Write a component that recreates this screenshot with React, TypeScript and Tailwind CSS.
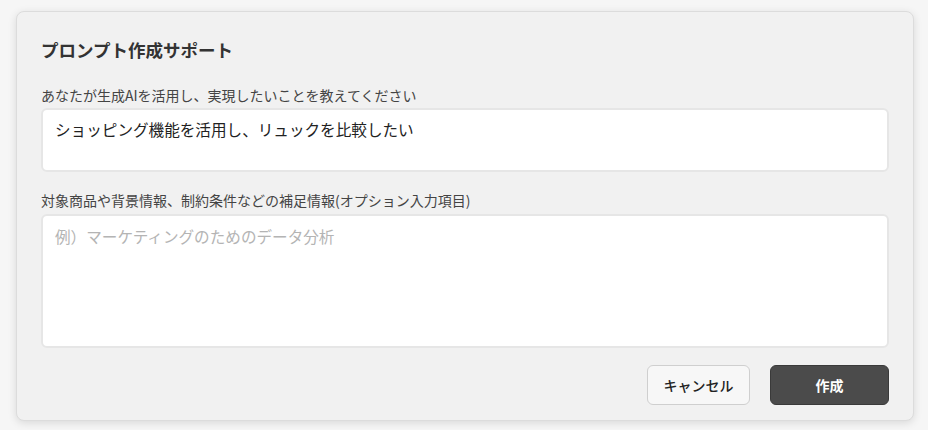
export default function App() {
  return (
    <div
      className="min-h-[430px] w-[928px] bg-[#f6f6f6] pt-[11px] pl-[16px] pr-[14px]"
      style={{ fontFamily: '"Noto Sans CJK JP", "Noto Sans", sans-serif' }}
    >
      <div className="flex h-[410px] flex-col rounded-[8px] border border-[#dcdcdc] bg-[#f1f1f1] px-[24px] pt-[26px] pb-[15px] shadow-[0_2px_8px_rgba(0,0,0,0.12)]">
        <h2 className="text-[17.5px] leading-[24px] font-bold text-[#333]">プロンプト作成サポート</h2>

        <label className="mt-[23px] text-[14px] leading-[20px] text-[#444]">
          あなたが生成AIを活用し、実現したいことを教えてください
        </label>
        <textarea
          readOnly
          defaultValue="ショッピング機能を活用し、リュックを比較したい"
          className="mt-[3px] h-[64px] resize-none rounded-[6px] border-2 border-[#e6e6e6] bg-white px-[12px] py-[7px] text-[15.6px] leading-[24px] text-[#222] outline-none"
        />

        <label className="mt-[18px] text-[14px] leading-[20px] text-[#444]">
          対象商品や背景情報、制約条件などの補足情報(オプション入力項目)
        </label>
        <textarea
          readOnly
          placeholder="例）マーケティングのためのデータ分析"
          className="mt-[4px] h-[134px] resize-none rounded-[6px] border-2 border-[#e6e6e6] bg-white px-[12px] py-[8px] text-[15.6px] leading-[24px] text-[#222] outline-none placeholder:text-[#b4b4b4]"
        />

        <div className="mt-[17px] flex justify-end gap-[20px]">
          <button className="h-[40px] w-[103px] rounded-[6px] border border-[#cfcfcf] bg-[#f7f7f7] text-[14px] font-medium text-[#222]">
            キャンセル
          </button>
          <button className="h-[40px] w-[119px] rounded-[6px] border border-[#3a3a3a] bg-[#4b4b4b] text-[14px] font-bold text-white">
            作成
          </button>
        </div>
      </div>
    </div>
  );
}
